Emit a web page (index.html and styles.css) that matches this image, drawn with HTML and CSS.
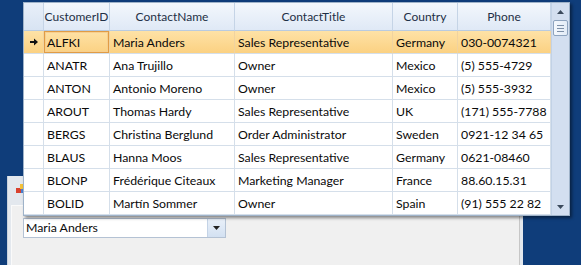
FILE: index.html
```html
<!DOCTYPE html>
<html lang="en">
<head>
  <meta charset="UTF-8" />
  <title>Customers</title>
  <link rel="stylesheet" href="styles.css">
</head>
<body>
  <div class="window">
    <div class="titlebar">
      <svg class="app-icon" width="10" height="10" viewBox="0 0 10 10">
        <rect x="0" y="4" width="5" height="5" fill="#d9412e"/>
        <rect x="4" y="0" width="5" height="5" fill="#f3c13a"/>
        <rect x="5" y="5" width="4" height="4" fill="#4a7fd0"/>
      </svg>
    </div>
    <div class="client">
      <div class="combo">
        <span class="combo-text">Maria Anders</span>
        <span class="combo-btn">
          <svg width="7" height="4" viewBox="0 0 7 4"><path d="M0 0h7L3.5 4z" fill="#222"/></svg>
        </span>
      </div>
    </div>
  </div>

  <div class="popup">
    <div class="grid">
      <div class="hcell corner"></div>
      <div class="hcell">CustomerID</div>
      <div class="hcell">ContactName</div>
      <div class="hcell">ContactTitle</div>
      <div class="hcell">Country</div>
      <div class="hcell">Phone</div>

      <div class="rh selected"><svg width="8" height="8" viewBox="0 0 8 8"><path d="M0 3h4V0.5L8 4 4 7.5V5H0z" fill="#111"/></svg></div>
      <div class="cell selected current">ALFKI</div>
      <div class="cell selected">Maria Anders</div>
      <div class="cell selected">Sales Representative</div>
      <div class="cell selected">Germany</div>
      <div class="cell selected">030-0074321</div>

      <div class="rh"></div>
      <div class="cell">ANATR</div>
      <div class="cell">Ana Trujillo</div>
      <div class="cell">Owner</div>
      <div class="cell">Mexico</div>
      <div class="cell">(5) 555-4729</div>

      <div class="rh"></div>
      <div class="cell">ANTON</div>
      <div class="cell">Antonio Moreno</div>
      <div class="cell">Owner</div>
      <div class="cell">Mexico</div>
      <div class="cell">(5) 555-3932</div>

      <div class="rh"></div>
      <div class="cell">AROUT</div>
      <div class="cell">Thomas Hardy</div>
      <div class="cell">Sales Representative</div>
      <div class="cell">UK</div>
      <div class="cell">(171) 555-7788</div>

      <div class="rh"></div>
      <div class="cell">BERGS</div>
      <div class="cell">Christina Berglund</div>
      <div class="cell">Order Administrator</div>
      <div class="cell">Sweden</div>
      <div class="cell">0921-12 34 65</div>

      <div class="rh"></div>
      <div class="cell">BLAUS</div>
      <div class="cell">Hanna Moos</div>
      <div class="cell">Sales Representative</div>
      <div class="cell">Germany</div>
      <div class="cell">0621-08460</div>

      <div class="rh"></div>
      <div class="cell">BLONP</div>
      <div class="cell">Frédérique Citeaux</div>
      <div class="cell">Marketing Manager</div>
      <div class="cell">France</div>
      <div class="cell">88.60.15.31</div>

      <div class="rh"></div>
      <div class="cell">BOLID</div>
      <div class="cell">Martín Sommer</div>
      <div class="cell">Owner</div>
      <div class="cell">Spain</div>
      <div class="cell">(91) 555 22 82</div>
    </div>

    <div class="vscroll">
      <div class="arrow">
        <svg width="7" height="4" viewBox="0 0 7 4"><path d="M0 4h7L3.5 0z" fill="#3b4a5c"/></svg>
      </div>
      <div class="thumb"><span></span><span></span><span></span></div>
      <div class="track"></div>
      <div class="arrow">
        <svg width="7" height="4" viewBox="0 0 7 4"><path d="M0 0h7L3.5 4z" fill="#3b4a5c"/></svg>
      </div>
    </div>
  </div>
</body>
</html>
```

FILE: styles.css
```css
* {
  margin: 0;
  padding: 0;
  box-sizing: border-box;
}

body {
  width: 581px;
  height: 265px;
  overflow: hidden;
  position: relative;
  background: #0f3d7a;
  font-family: "Lato", "Open Sans", sans-serif;
  font-size: 12px;
  color: #0a0a0a;
}

/* owner window behind the drop down */
.window {
  position: absolute;
  left: 7px;
  top: 176px;
  width: 516px;
  height: 89px;
  background: #e3e8ee;
  border-left: 1px solid #c9d2dd;
  padding: 0 3px;
}

.titlebar {
  height: 29px;
  padding: 8px 0 0 5px;
}

.app-icon {
  display: block;
}

.client {
  height: 60px;
  background: #f0f0f0;
  border-top: 1px solid #fafafa;
  border-left: 1px solid #fafafa;
  border-right: 1px solid #c6c6c6;
  padding: 12px 11px;
}

.combo {
  display: flex;
  width: 203px;
  height: 20px;
  background: #fff;
  border: 1px solid #b4c2d4;
}

.combo-text {
  flex: 1;
  padding-left: 2px;
  line-height: 18px;
  font-size: 12.3px;
}

.combo-btn {
  width: 18px;
  display: flex;
  align-items: center;
  justify-content: center;
  background: linear-gradient(#e9f0f9, #d3e1f2);
  border-left: 1px solid #c4d3e6;
}

/* drop down grid */
.popup {
  position: absolute;
  left: 23px;
  top: 2px;
  display: flex;
  border: 1px solid #9fb3c9;
  background: #fff;
  box-shadow: 2px 2px 3px rgba(0, 0, 0, 0.45);
}

.grid {
  display: grid;
  grid-template-columns: 20px 66px 125px 158px 65px 93px;
  grid-template-rows: 28px;
  grid-auto-rows: 23px;
  font-size: 12.3px;
}

.hcell {
  display: flex;
  align-items: center;
  justify-content: center;
  background: linear-gradient(#f3f7fc, #dfe9f6);
  border-right: 1px solid #c5d4e6;
  border-bottom: 1px solid #b9cbe0;
  color: #1e2f45;
  font-size: 12px;
}

.hcell.corner {
  background: linear-gradient(#e8eff9, #d8e4f3);
}

.cell,
.rh {
  display: flex;
  align-items: center;
  border-right: 1px solid #d5dfea;
  border-bottom: 1px solid #d5dfea;
  white-space: nowrap;
  overflow: hidden;
}

.cell {
  padding-left: 3px;
}

.rh {
  justify-content: center;
}

.selected {
  background: linear-gradient(#fee2a6, #fbd182);
  border-right-color: #f0d3a0;
}

.current {
  box-shadow: inset 0 0 0 1px #e19c45, inset 0 0 0 2px #f7cf8f;
}

.vscroll {
  width: 18px;
  display: flex;
  flex-direction: column;
  align-items: center;
  background: #d3dff0;
  border-left: 1px solid #c2d2e6;
}

.arrow {
  height: 17px;
  display: flex;
  align-items: center;
  justify-content: center;
}

.thumb {
  width: 15px;
  height: 16px;
  display: flex;
  flex-direction: column;
  align-items: center;
  justify-content: center;
  gap: 2px;
  background: linear-gradient(90deg, #f4f8fd, #e3ecf7);
  border: 1px solid #8ea4bf;
  border-radius: 2px;
}

.thumb span {
  width: 7px;
  height: 1px;
  background: #7d90a8;
}

.track {
  flex: 1;
}
```
